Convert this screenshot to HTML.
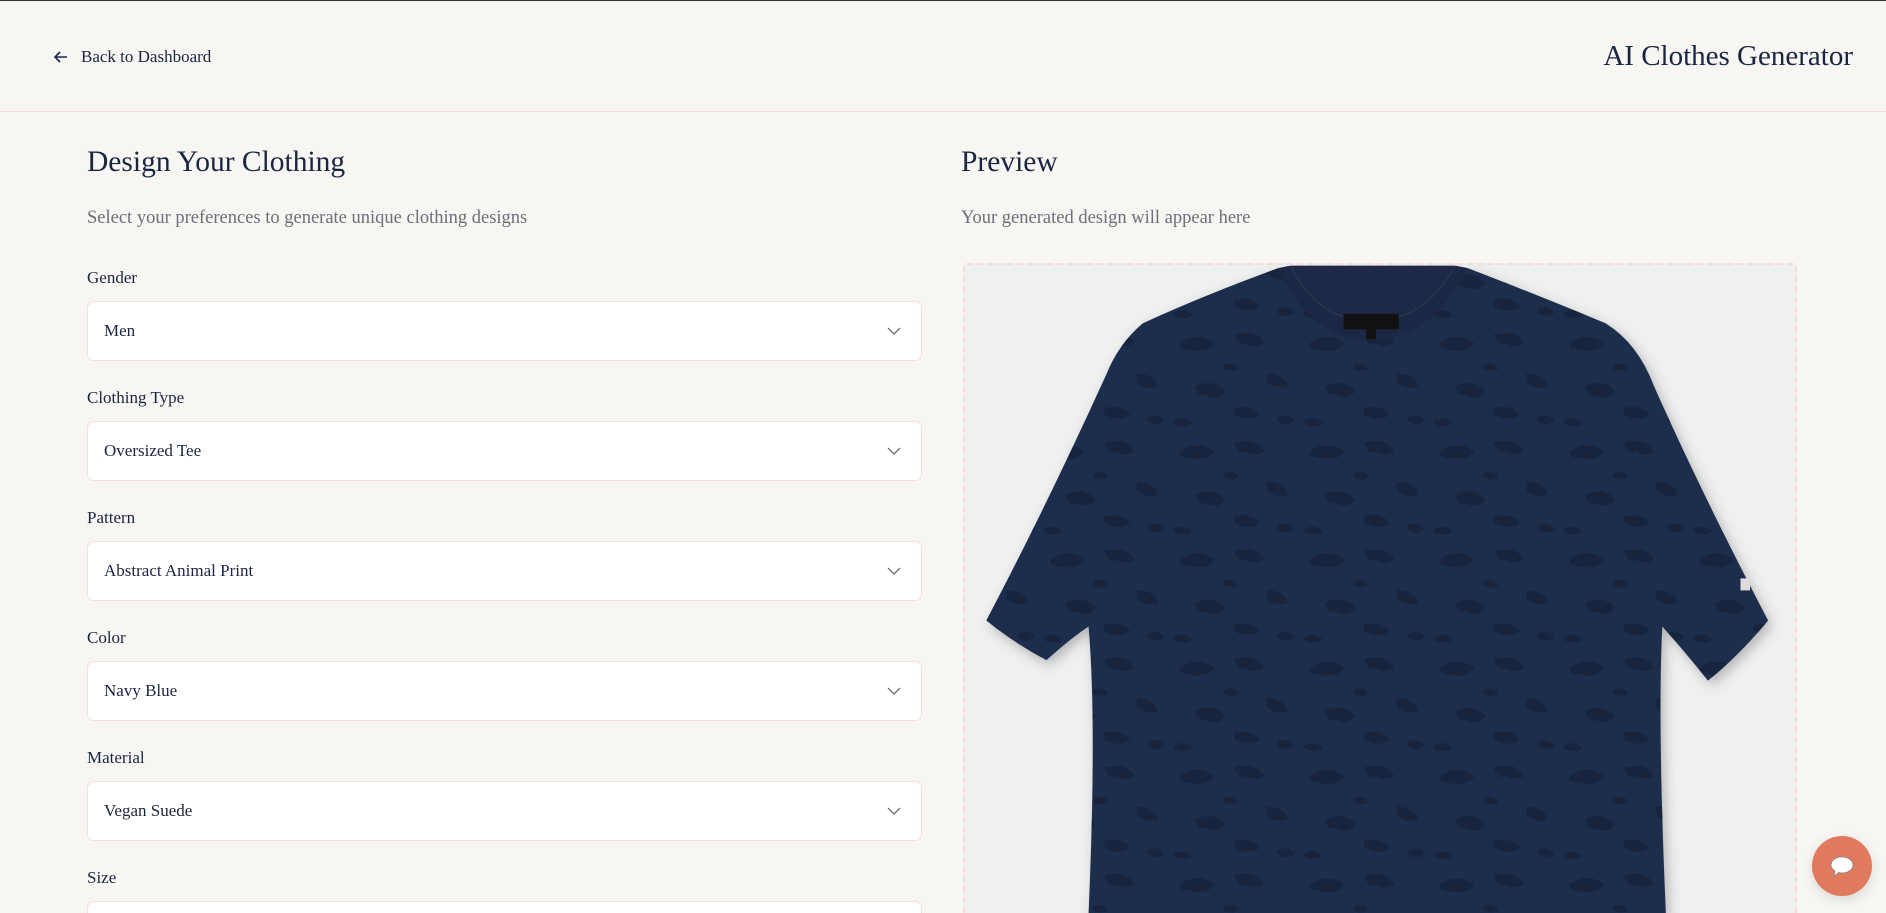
<!DOCTYPE html>
<html style="width:1886px;height:913px;overflow:hidden"><head><meta charset="utf-8"><style>
*{box-sizing:border-box;margin:0;padding:0}
body{width:1886px;height:913px;overflow:hidden;background:#f8f6f3;font-family:"Liberation Serif",serif;color:#1a2540;position:relative;border-top:1px solid #333}
.hdr{position:absolute;left:0;top:0;width:1886px;height:111px;border-bottom:1px solid #f3ddd6}
.back{position:absolute;left:53px;top:46px;font-size:17px;display:flex;align-items:center;gap:12px}
.title{position:absolute;right:33px;top:39px;font-size:29px}
h1{position:absolute;left:87px;top:145px;font-size:29.5px;font-weight:normal}
.sub{position:absolute;left:87px;top:207px;font-size:18.5px;color:#6b6f7a}
.lbl{position:absolute;left:87px;font-size:17px}
.sel{position:absolute;left:87px;width:835px;height:60px;background:#fff;border:1px solid #f6ddd6;border-radius:7px;font-size:17px;padding:0 16px;display:flex;align-items:center;justify-content:space-between}
.sel svg{margin-right:4px}
.pbox{position:absolute;left:963px;top:262px;width:834px;height:651px;background:#eff0f0;border:2px dashed #f6dcd6;border-bottom:none;border-radius:4px 4px 0 0}
.chat{position:absolute;left:1812px;top:835px;width:60px;height:60px;border-radius:50%;background:#e07a5f;box-shadow:0 4px 12px rgba(0,0,0,.12);display:flex;align-items:center;justify-content:center}
</style></head><body>
<div class="hdr">
<div class="back"><svg width="16" height="16" viewBox="0 0 16 16"><path d="M14 8H2M7 3L2 8l5 5" stroke="#1a2540" stroke-width="1.6" fill="none"/></svg>Back to Dashboard</div>
<div class="title">AI Clothes Generator</div>
</div>
<h1>Design Your Clothing</h1>
<div class="sub">Select your preferences to generate unique clothing designs</div>

<div class="lbl" style="top:267px">Gender</div>
<div class="sel" style="top:300px">Men<svg width="14" height="8" viewBox="0 0 14 8"><path d="M1 1l6 6 6-6" stroke="#777" stroke-width="1.4" fill="none"/></svg></div>
<div class="lbl" style="top:387px">Clothing Type</div>
<div class="sel" style="top:420px">Oversized Tee<svg width="14" height="8" viewBox="0 0 14 8"><path d="M1 1l6 6 6-6" stroke="#777" stroke-width="1.4" fill="none"/></svg></div>
<div class="lbl" style="top:507px">Pattern</div>
<div class="sel" style="top:540px">Abstract Animal Print<svg width="14" height="8" viewBox="0 0 14 8"><path d="M1 1l6 6 6-6" stroke="#777" stroke-width="1.4" fill="none"/></svg></div>
<div class="lbl" style="top:627px">Color</div>
<div class="sel" style="top:660px">Navy Blue<svg width="14" height="8" viewBox="0 0 14 8"><path d="M1 1l6 6 6-6" stroke="#777" stroke-width="1.4" fill="none"/></svg></div>
<div class="lbl" style="top:747px">Material</div>
<div class="sel" style="top:780px">Vegan Suede<svg width="14" height="8" viewBox="0 0 14 8"><path d="M1 1l6 6 6-6" stroke="#777" stroke-width="1.4" fill="none"/></svg></div>
<div class="lbl" style="top:867px">Size</div>
<div class="sel" style="top:900px;height:13px;border-bottom:none;border-radius:7px 7px 0 0"></div>

<div style="position:absolute;left:961px;top:145px;font-size:29.5px">Preview</div>
<div style="position:absolute;left:961px;top:207px;font-size:18.5px;color:#6b6f7a">Your generated design will appear here</div>
<div class="pbox"></div>
<svg style="position:absolute;left:0;top:0" width="1886" height="913" viewBox="0 0 1568 759">
<defs>
<pattern id="pt" width="60" height="50" patternUnits="userSpaceOnUse" patternTransform="scale(1.8)">
<path d="M5 8q8-6 16 0q-4 6-16 2z M30 4q10-3 14 4q-6 3-8 0q-4 2-6-4z M45 22q8 0 10 6q-6 2-10-2z M12 28q8-4 14 2q-3 5-9 2q-4 1-5-4z M30 38q8-2 12 3q-5 4-12 0z M2 44q5-3 9 1q-4 3-9 0z M50 42q6-2 8 2q-4 3-8 0z M25 18q5-2 7 2q-3 2-7 0z" fill="#16213a"/>
</pattern>
<filter id="sh"><feDropShadow dx="3" dy="4" stdDeviation="5" flood-opacity=".25"/></filter></defs>
<path d="M1063 222 Q1000 245 950 268 Q930 285 920 310 Q870 420 820 515 Q845 535 870 548 Q890 530 905 520 Q912 600 905 759 L1385 759 Q1378 600 1382 520 Q1400 540 1420 565 Q1445 545 1470 515 Q1415 410 1375 320 Q1362 285 1335 268 Q1280 245 1220 222 Q1190 275 1140 275 Q1090 275 1063 222Z" fill="#1f2d4c" filter="url(#sh)"/>
<path d="M1063 222 Q1000 245 950 268 Q930 285 920 310 Q870 420 820 515 Q845 535 870 548 Q890 530 905 520 Q912 600 905 759 L1385 759 Q1378 600 1382 520 Q1400 540 1420 565 Q1445 545 1470 515 Q1415 410 1375 320 Q1362 285 1335 268 Q1280 245 1220 222 Q1190 275 1140 275 Q1090 275 1063 222Z" fill="url(#pt)" opacity=".75"/>
<path d="M1063 222 Q1090 282 1140 282 Q1190 282 1220 222 L1210 220 Q1185 266 1140 266 Q1095 266 1073 220Z" fill="#1b2744"/>
<path d="M1073 220 Q1095 266 1140 266 Q1185 266 1210 220Z" fill="#1d2946"/>
<rect x="1117" y="260" width="46" height="13" fill="#111"/>
<rect x="1136" y="273" width="8" height="8" fill="#111"/>
<rect x="1447" y="480" width="8" height="10" fill="#ddd"/>
</svg>
<div class="chat"><svg width="26" height="22" viewBox="0 0 26 22"><path d="M13 2C7 2 2 5.5 2 10c0 2.5 1.5 4.5 4 6l-1 5 5-3.5c1 .3 2 .5 3 .5 6 0 11-3.5 11-8S19 2 13 2z" fill="#fff" stroke="#888" stroke-width=".8"/></svg></div>
</body></html>
